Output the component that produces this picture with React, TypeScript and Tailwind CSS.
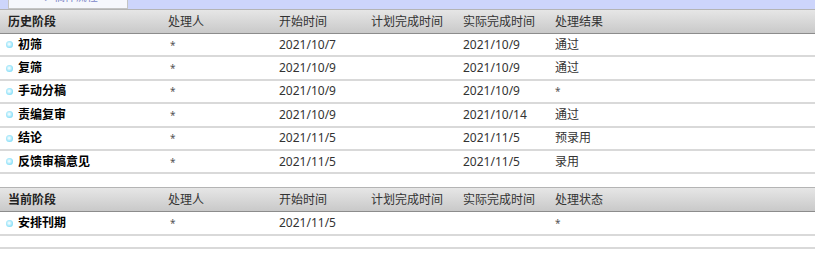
import React from 'react';

interface Stage {
  name: string;
  handler: string;
  start: string;
  planned: string;
  actual: string;
  result: string;
}

const history: Stage[] = [
  { name: '初筛', handler: '*', start: '2021/10/7', planned: '', actual: '2021/10/9', result: '通过' },
  { name: '复筛', handler: '*', start: '2021/10/9', planned: '', actual: '2021/10/9', result: '通过' },
  { name: '手动分稿', handler: '*', start: '2021/10/9', planned: '', actual: '2021/10/9', result: '*' },
  { name: '责编复审', handler: '*', start: '2021/10/9', planned: '', actual: '2021/10/14', result: '通过' },
  { name: '结论', handler: '*', start: '2021/11/5', planned: '', actual: '2021/11/5', result: '预录用' },
  { name: '反馈审稿意见', handler: '*', start: '2021/11/5', planned: '', actual: '2021/11/5', result: '录用' },
];

const current: Stage[] = [
  { name: '安排刊期', handler: '*', start: '2021/11/5', planned: '', actual: '', result: '*' },
];

const cols = 'grid grid-cols-[160px_111px_92px_92px_92px_1fr]';

const Header: React.FC<{ first: string; last: string }> = ({ first, last }) => (
  <div
    className={`${cols} h-[25px] items-center border-t border-t-[#b4b4b4] border-b border-b-[#8c8c8c] bg-[linear-gradient(#e6e6e6,#c9c9c9)] pl-2 text-[#333]`}
  >
    <div className="font-bold text-[#222]">{first}</div>
    <div>处理人</div>
    <div>开始时间</div>
    <div>计划完成时间</div>
    <div>实际完成时间</div>
    <div>{last}</div>
  </div>
);

const Row: React.FC<{ s: Stage }> = ({ s }) => (
  <div className={`${cols} h-[23.4px] items-center border-b-2 border-[#d9d9d9] pl-[6px] text-[#333]`}>
    <div className="flex items-center gap-[5px] font-bold text-black">
      <span className="h-[7px] w-[7px] rounded-full bg-[radial-gradient(circle_at_45%_45%,#f0fcff_10%,#5fd3f5_90%)]" />
      {s.name}
    </div>
    <div className="pl-1 text-[10px] text-[#555]">{s.handler}</div>
    <div className="pl-[2px]">{s.start}</div>
    <div className="pl-[2px]">{s.planned}</div>
    <div className="pl-[2px]">{s.actual}</div>
    <div className={s.result === '*' ? 'pl-[2px] text-[10px] text-[#555]' : 'pl-[2px]'}>{s.result}</div>
  </div>
);

export default function App() {
  return (
    <div className="h-[259px] w-[815px] overflow-hidden bg-white text-[12px] leading-none [font-family:'Noto_Sans','Noto_Sans_CJK_SC',sans-serif]">
      <div className="flex h-[9px] bg-[#cdd5fb] pl-2">
        <div className="flex h-[9px] w-[120px] items-end overflow-hidden border-x border-b border-[#c4c4c4] bg-[#f6f7fc] pl-[36px]">
          <span className="mb-[6px] text-[11px] text-[#7c86c8]">▸ 稿件流程</span>
        </div>
      </div>
      <Header first="历史阶段" last="处理结果" />
      {history.map((s) => (
        <Row key={s.name} s={s} />
      ))}
      <div className="h-[13px]" />
      <Header first="当前阶段" last="处理状态" />
      {current.map((s) => (
        <Row key={s.name} s={s} />
      ))}
      <div className="h-[13px] border-b-2 border-[#d9d9d9]" />
    </div>
  );
}
